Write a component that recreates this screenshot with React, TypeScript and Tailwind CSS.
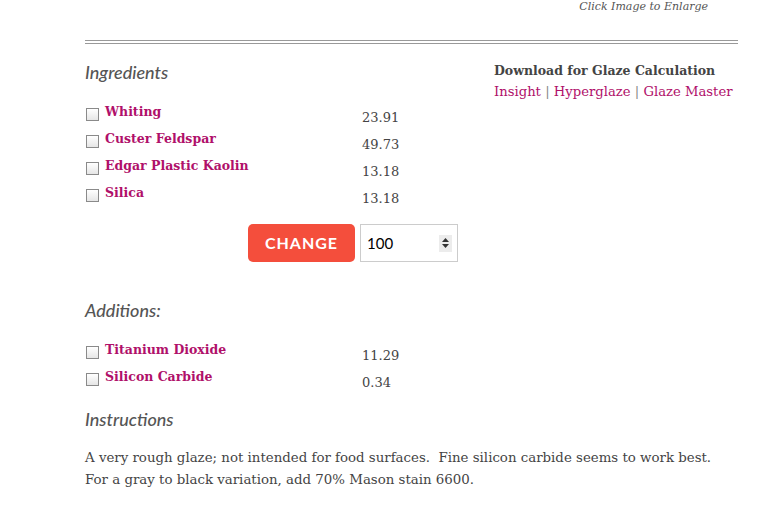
import React from 'react';

const serif = "font-['DejaVu_Serif',serif]";
const lato = "font-['Lato',sans-serif]";

interface Row {
  name: string;
  amount: string;
}

const ingredients: Row[] = [
  { name: 'Whiting', amount: '23.91' },
  { name: 'Custer Feldspar', amount: '49.73' },
  { name: 'Edgar Plastic Kaolin', amount: '13.18' },
  { name: 'Silica', amount: '13.18' },
];

const additions: Row[] = [
  { name: 'Titanium Dioxide', amount: '11.29' },
  { name: 'Silicon Carbide', amount: '0.34' },
];

const Heading: React.FC<{ children: React.ReactNode }> = ({ children }) => (
  <h3 className={`${lato} italic text-[18px] leading-[24px] text-[#555] font-medium`}>{children}</h3>
);

const RowList: React.FC<{ rows: Row[] }> = ({ rows }) => (
  <ul className="flex flex-col">
    {rows.map((r) => (
      <li key={r.name} className="flex h-[27px] items-start">
        <div className="flex w-[277px] items-center gap-[6px] h-[20px]">
          <span className="ml-px w-[13px] h-[13px] border border-[#8a8a8a] bg-gradient-to-b from-white to-[#e6e6e6] mt-[4px]" />
          <a className={`${serif} text-[12.5px] font-bold text-[#b0106a]`}>{r.name}</a>
        </div>
        <span className={`${serif} text-[13px] text-[#444] mt-[8px] leading-[16px]`}>{r.amount}</span>
      </li>
    ))}
  </ul>
);

export default function App() {
  return (
    <div className="w-[768px] h-[507px] bg-white overflow-hidden">
      <div className="ml-[85px] w-[653px]">
        <p className={`${serif} italic text-[11px] text-[#555] leading-[14px] text-right pr-[30px]`}>Click Image to Enlarge</p>
        <div className="mt-[26px] border-t border-b border-[#999] h-[4px]" />

        <div className="flex mt-[16px]">
          <div className="w-[409px] shrink-0">
            <Heading>Ingredients</Heading>
            <div className="mt-[18px]">
              <RowList rows={ingredients} />
            </div>
            <div className="flex items-center mt-[14px] pl-[163px]">
              <button className={`${lato} h-[38px] w-[107px] rounded-[5px] bg-[#f44e3c] text-white font-bold text-[16px] tracking-[1px]`}>
                CHANGE
              </button>
              <div className="ml-[5px] h-[38px] w-[98px] border border-[#ccc] flex items-center pl-[6px] pr-[5px]">
                <span className={`${lato} text-[15px] text-black flex-1`}>100</span>
                <span className="flex flex-col items-center justify-center w-[13px] h-[17px] bg-[#ececec]">
                  <svg width="7" height="4" viewBox="0 0 7 4"><path d="M0 4 L3.5 0 L7 4Z" fill="#333" /></svg>
                  <svg width="7" height="4" viewBox="0 0 7 4" className="mt-[2px]"><path d="M0 0 L3.5 4 L7 0Z" fill="#333" /></svg>
                </span>
              </div>
            </div>
          </div>
          <div className="whitespace-nowrap">
            <p className={`${serif} font-bold text-[12.5px] text-[#444] leading-[21px]`}>Download for Glaze Calculation</p>
            <p className={`${serif} text-[13.2px] text-[#b0106a] leading-[21px]`}>
              Insight <span className="text-[#888]">|</span> Hyperglaze <span className="text-[#888]">|</span> Glaze Master
            </p>
          </div>
        </div>

        <div className="mt-[36px]">
          <Heading>Additions:</Heading>
          <div className="mt-[18px]">
            <RowList rows={additions} />
          </div>
        </div>

        <div className="mt-[13px]">
          <Heading>Instructions</Heading>
          <p className={`${serif} text-[13.35px] leading-[22px] text-[#444] mt-[16px] whitespace-nowrap`}>
            A very rough glaze; not intended for food surfaces.&nbsp; Fine silicon carbide seems to work best.
            <br />
            For a gray to black variation, add 70% Mason stain 6600.
          </p>
        </div>
      </div>
    </div>
  );
}
